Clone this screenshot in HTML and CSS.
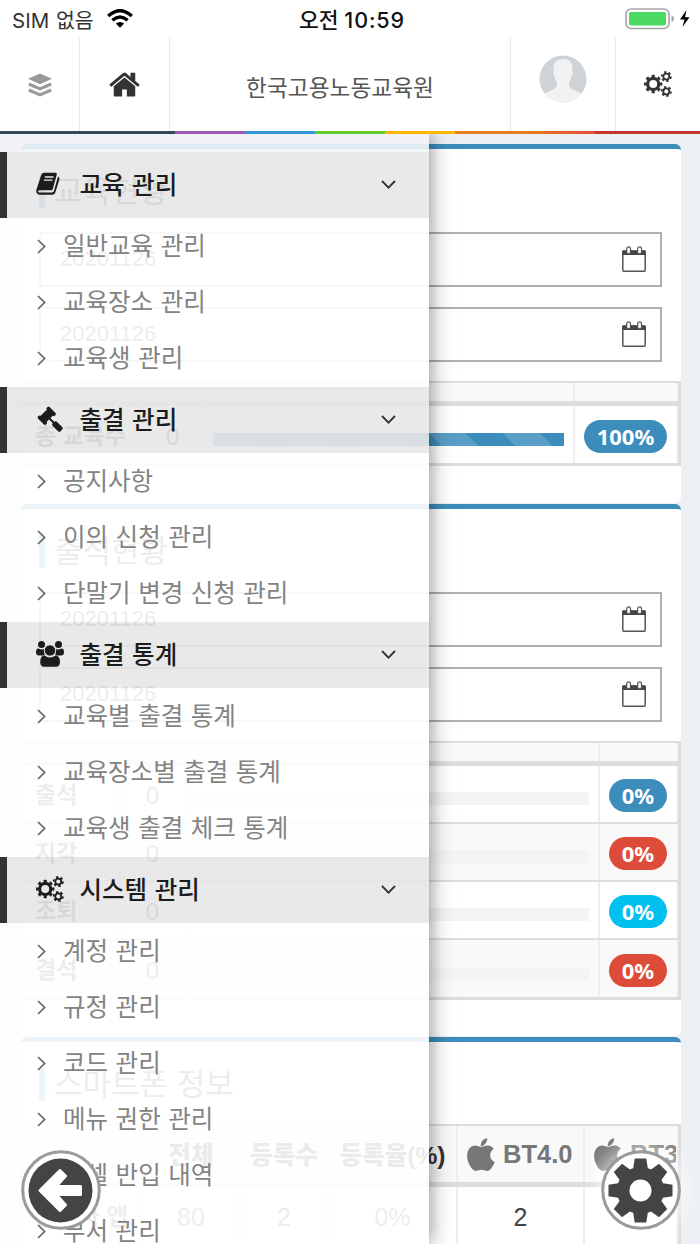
FILE: index.html
```html
<!DOCTYPE html>
<html lang="ko">
<head>
<meta charset="utf-8">
<title>한국고용노동교육원</title>
<link rel="stylesheet" href="styles.css">
</head>
<body>
<svg class="defs" aria-hidden="true">
  <symbol id="cogs" viewBox="0 0 28 26">
    <g fill="none" stroke="currentColor">
      <circle cx="9.2" cy="13" r="5.6" stroke-width="3.2"/>
      <circle cx="9.2" cy="13" r="8" stroke-width="2.4" pathLength="16" stroke-dasharray="1 1" stroke-dashoffset=".5"/>
      <circle cx="22.3" cy="5.6" r="3" stroke-width="1.8"/>
      <circle cx="22.3" cy="5.6" r="4.6" stroke-width="1.8" pathLength="12" stroke-dasharray="1 1"/>
      <circle cx="22.3" cy="20.4" r="3" stroke-width="1.8"/>
      <circle cx="22.3" cy="20.4" r="4.6" stroke-width="1.8" pathLength="12" stroke-dasharray="1 1"/>
    </g>
  </symbol>
  <symbol id="gavel" viewBox="0 0 1792 1792"><path fill="currentColor" d="M1771 1536q0 53-37 90l-107 108q-39 37-91 37-53 0-90-37l-363-364q-38-36-38-90 0-53 43-96l-256-256-126 126q-14 14-34 14t-34-14q2 2 12.500 12t12.500 13 10 11.500 10 13.500 6 13.500 5.500 16.500 1.500 18q0 38-28 68-3 3-16.500 18t-19 20.500-18.500 16.500-22 15.500-22 9-26 4.500q-40 0-68-28l-408-408q-28-28-28-68 0-13 4.500-26t9-22 15.500-22 16.500-18.500 20.500-19 18-16.500q30-28 68-28 10 0 18 1.500t16.500 5.500 13.500 6 13.500 10 11.500 10 13 12.500 12 12.500q-14-14-14-34t14-34l348-348q14-14 34-14t34 14q-2-2-12.500-12t-12.500-13-10-11.500-10-13.500-6-13.500-5.500-16.500-1.500-18q0-38 28-68 3-3 16.500-18t19-20.500 18.500-16.500 22-15.500 22-9 26-4.500q40 0 68 28l408 408q28 28 28 68 0 13-4.500 26t-9 22-15.500 22-16.500 18.500-20.500 19-18 16.500q-30 28-68 28-10 0-18-1.500t-16.500-5.500-13.500-6-13.500-10-11.500-10-13-12.500-12-12.500q14 14 14 34t-14 34l-126 126 256 256q43-43 96-43 52 0 91 37l363 363q37 39 37 91z"/></symbol>
  <symbol id="home" viewBox="70 220 1652 1340"><path fill="currentColor" d="M1472 992v480q0 26-19 45t-45 19h-384v-384h-256v384h-384q-26 0-45-19t-19-45v-480q0-1 .5-3t.5-3l575-474 575 474q1 2 1 6zm223-69l-62 74q-8 9-21 11h-3q-13 0-21-7l-692-577-692 577q-12 8-24 7-13-2-21-11l-62-74q-8-10-7-23.500t11-21.500l719-599q32-26 76-26t76 26l244 204v-195q0-14 9-23t23-9h192q14 0 23 9t9 23v408l219 182q10 8 11 21.500t-7 23.500z"/></symbol>
  <symbol id="apple" viewBox="192 0 1408 1664"><path fill="currentColor" d="M1585 1215q-39 125-123 250-129 196-257 196-49 0-140-32-86-32-151-32-61 0-142 33-81 34-132 34-152 0-301-259-147-261-147-503 0-228 113-374 113-144 284-144 72 0 177 30 104 30 138 30 45 0 143-34 102-34 173-34 119 0 213 65 52 36 104 100-79 67-114 118-65 94-65 207 0 124 69 223t158 126zm-376-1173q0 61-29 136-30 75-93 138-54 54-108 72-37 11-104 17 3-149 78-257 74-107 250-148 1 3 2.500 11t2.500 11q0 4 .5 10t.5 10z"/></symbol>
  <symbol id="book" viewBox="0 0 24 24">
    <path fill="currentColor" d="M8 .8H19.500Q21.300 .8 20.800 2.600L16.800 17Q16.400 18.300 15 18.300H3.800Q2.200 18.300 2.100 19.500Q2 20.400 3.500 20.400H16Q17.500 20.400 18 18.800L22 4.500Q24 5.500 23.400 7.500L19.200 20.800Q18.500 22.800 16.500 22.800H4Q.5 22.800 .3 19Q.2 17.800 .8 16.500L5.300 2.700Q5.900 .8 8 .8Z"/>
    <path stroke="#e9e9e9" stroke-width="1.300" d="M8.800 5H17.500M7.800 8.200H16.500"/>
  </symbol>
  <symbol id="users" viewBox="0 0 28 26">
    <g fill="currentColor">
      <circle cx="5.500" cy="3.500" r="3.500"/><circle cx="22.500" cy="3.500" r="3.500"/>
      <path d="M0 11Q0 7.300 2.500 7.500Q5.500 9 8.500 8V14.500H3Q0 14.500 0 11ZM28 11Q28 7.300 25.500 7.500Q22.500 9 19.500 8V14.500H25Q28 14.500 28 11Z"/>
      <circle cx="14" cy="9.500" r="5.700" stroke="#e9e9e9" stroke-width="1"/>
      <path d="M4.200 21Q4.200 14.400 8.500 14.400Q14 18.500 19.500 14.400Q24 14.400 24 21Q24 25.800 20 25.800H8Q4.200 25.800 4.200 21Z"/>
    </g>
  </symbol>
  <symbol id="right" viewBox="0 0 9 15"><path fill="none" stroke="currentColor" stroke-width="1.700" d="M1 1L7.600 7.500L1 14"/></symbol>
  <symbol id="down" viewBox="0 0 15 9"><path fill="none" stroke="currentColor" stroke-width="1.800" d="M1 1L7.500 7.600L14 1"/></symbol>
  <symbol id="cal" viewBox="0 0 24 26">
    <rect x=".8" y="5" width="22.400" height="20.200" rx="1" fill="#fff" stroke="#555" stroke-width="1.500"/>
    <path fill="#444" d="M.5 4.500H23.500V9H.5Z"/>
    <g fill="#fff" stroke="#555" stroke-width="1.200"><rect x="4.700" y=".8" width="3.800" height="7" rx="1.900"/><rect x="15.700" y=".8" width="3.800" height="7" rx="1.900"/></g>
  </symbol>
</svg>

<div class="screen">
  <div class="status">
    <div class="carrier">SIM 없음
      <svg class="wifi" viewBox="0 0 26 19"><g fill="none" stroke="#000" stroke-width="3.300"><path d="M1.200 7Q13-3.500 24.800 7"/><path d="M5.400 11.200Q13 4.800 20.600 11.200"/></g><path d="M8.800 14.500Q13 11.400 17.200 14.500L13 18.800Z"/></svg>
    </div>
    <div class="clock">오전 <span class="time">10:59</span></div>
    <svg class="battery" viewBox="0 0 66 22"><rect x="1" y="1" width="43" height="19.500" rx="5" fill="#fff" stroke="#a5a5a5" stroke-width="1.600"/><rect x="4" y="4" width="37" height="13.500" rx="2" fill="#4cd964"/><path d="M46.500 7.500Q49 8 49 10.700T46.500 14Z" fill="#a5a5a5"/><path d="M61.500 2L55 11.500H59.500L57.500 19L64.500 9.300H60Z"/></svg>
  </div>
  <header class="topbar">
    <div class="tb layers"><svg viewBox="0 0 24 24"><path fill="#999" d="M12 .5L24 5.800L12 11.200L0 5.800Z"/><path fill="none" stroke="#999" stroke-width="3" d="M.8 11L12 15.800L23.200 11M.8 17L12 21.800L23.200 17"/></svg></div>
    <div class="tb home"><svg><use href="#home"/></svg></div>
    <div class="tb brand">한국고용노동교육원</div>
    <div class="tb user"><svg viewBox="0 0 48 48"><clipPath id="av"><circle cx="24" cy="24" r="23.500"/></clipPath><g clip-path="url(#av)"><path fill="#cdd3d6" d="M0 0H48V48H0Z"/><path fill="#f2f2f2" d="M24 4Q34 4 33.500 14Q34.500 18 32.500 22Q31 26 30 28Q29.500 32 33 34L48 41V48H0V41L15 34Q18.500 32 18 28Q16.500 26 15.500 22Q13.500 18 14.500 14Q14 4 24 4Z"/></g></svg></div>
    <div class="tb conf"><svg><use href="#cogs"/></svg></div>
  </header>
  <div class="stripe"></div>

  <main class="content">
    <section class="card">
      <h2 class="title"><span>교육현황</span></h2>
      <div class="dates">
        <div class="date">20201126<svg><use href="#cal"/></svg></div>
        <div class="date">20201126<svg><use href="#cal"/></svg></div>
      </div>
      <div class="table edu">
        <div class="tr th"><i></i><i></i><i></i><i></i></div>
        <div class="tr"><b class="name">총 교육수</b><span class="num">0</span><span class="prog"><span class="bar full"></span></span><span class="pct"><em class="badge blue">100%</em></span></div>
      </div>
    </section>
    <section class="card">
      <h2 class="title"><span>출석현황</span></h2>
      <div class="dates">
        <div class="date">20201126<svg><use href="#cal"/></svg></div>
        <div class="date">20201126<svg><use href="#cal"/></svg></div>
      </div>
      <div class="table att">
        <div class="tr th"><i></i><i></i><i></i><i></i></div>
        <div class="tr"><b class="name">출석</b><span class="num">0</span><span class="prog"><span class="bar"></span></span><span class="pct"><em class="badge blue">0%</em></span></div>
        <div class="tr odd"><b class="name">지각</b><span class="num">0</span><span class="prog"><span class="bar"></span></span><span class="pct"><em class="badge red">0%</em></span></div>
        <div class="tr"><b class="name">조퇴</b><span class="num">0</span><span class="prog"><span class="bar"></span></span><span class="pct"><em class="badge cyan">0%</em></span></div>
        <div class="tr odd"><b class="name">결석</b><span class="num">0</span><span class="prog"><span class="bar"></span></span><span class="pct"><em class="badge red">0%</em></span></div>
      </div>
    </section>
    <section class="card phone-card">
      <h2 class="title"><span>스마트폰 정보</span></h2>
      <div class="table phone">
        <div class="tr th"><b></b><b>전체</b><b>등록수</b><b>등록율(%)</b><b class="os"><svg><use href="#apple"/></svg>BT4.0</b><b class="os"><svg><use href="#apple"/></svg>BT3</b></div>
        <div class="tr"><b class="name">관리자 앱</b><span>80</span><span>2</span><span>0%</span><span>2</span><span></span></div>
      </div>
    </section>
  </main>

  <nav class="drawer">
    <div class="head"><svg class="i-book"><use href="#book"/></svg><span>교육 관리</span><svg class="down"><use href="#down"/></svg></div>
    <div class="item"><svg><use href="#right"/></svg><span>일반교육 관리</span></div>
    <div class="item"><svg><use href="#right"/></svg><span>교육장소 관리</span></div>
    <div class="item"><svg><use href="#right"/></svg><span>교육생 관리</span></div>
    <div class="head"><svg class="i-gavel"><use href="#gavel"/></svg><span>출결 관리</span><svg class="down"><use href="#down"/></svg></div>
    <div class="item"><svg><use href="#right"/></svg><span>공지사항</span></div>
    <div class="item"><svg><use href="#right"/></svg><span>이의 신청 관리</span></div>
    <div class="item"><svg><use href="#right"/></svg><span>단말기 변경 신청 관리</span></div>
    <div class="head"><svg><use href="#users"/></svg><span>출결 통계</span><svg class="down"><use href="#down"/></svg></div>
    <div class="item"><svg><use href="#right"/></svg><span>교육별 출결 통계</span></div>
    <div class="item"><svg><use href="#right"/></svg><span>교육장소별 출결 통계</span></div>
    <div class="item"><svg><use href="#right"/></svg><span>교육생 출결 체크 통계</span></div>
    <div class="head"><svg><use href="#cogs"/></svg><span>시스템 관리</span><svg class="down"><use href="#down"/></svg></div>
    <div class="item"><svg><use href="#right"/></svg><span>계정 관리</span></div>
    <div class="item"><svg><use href="#right"/></svg><span>규정 관리</span></div>
    <div class="item"><svg><use href="#right"/></svg><span>코드 관리</span></div>
    <div class="item"><svg><use href="#right"/></svg><span>메뉴 권한 관리</span></div>
    <div class="item"><svg><use href="#right"/></svg><span>엑셀 반입 내역</span></div>
    <div class="item"><svg><use href="#right"/></svg><span>부서 관리</span></div>
  </nav>

  <div class="fab back"><svg viewBox="0 0 80 80"><circle cx="40" cy="40" r="38.300" fill="#fff" stroke="#9b9b9b" stroke-width="3"/><circle cx="39.500" cy="40.500" r="32" fill="#444"/><path fill="#fff" stroke="#fff" stroke-width="3" stroke-linejoin="round" d="M19 40.500L39 20.500L44.500 26L35 36.500H59.500V44.500H35L44.500 55L39 60.500Z"/></svg></div>
  <div class="fab setup"><svg viewBox="0 0 80 80"><circle cx="40" cy="40" r="38.300" fill="#fff" stroke="#9b9b9b" stroke-width="3"/>
    <g fill="#444" transform="translate(39.500 40.500)"><circle r="23.500"/><g id="t"><path id="tooth" d="M-7.500-21L-5.800-32H5.800L7.500-21V21L5.800 32H-5.800L-7.500 21Z"/><use href="#tooth" transform="rotate(90)"/></g><use href="#t" transform="rotate(45)"/></g><circle cx="39.500" cy="40.500" r="11" fill="#fff"/></svg></div>
</div>
</body>
</html>
```
FILE: styles.css
```css
* { box-sizing: border-box; }
body { margin: 0; font-family: "Liberation Sans", "Noto Sans CJK KR", sans-serif; color: #444; background: #ecf0f5; }
.defs { position: absolute; width: 0; height: 0; }
.screen { position: relative; width: 700px; height: 1244px; overflow: hidden; }
svg { display: block; flex: none; }

.status { height: 38px; background: #fff; display: grid; grid-template-columns: 1fr auto 1fr; align-items: center; padding: 0 9px 0 12px; font-family: Inter, "Noto Sans CJK KR", sans-serif; font-size: 21.500px; color: #333; white-space: nowrap; }
.carrier { display: flex; align-items: center; gap: 13px; font-size: 20.500px; word-spacing: 1px; padding-bottom: 1px; }
.wifi { width: 26px; height: 19px; }
.clock { color: #111; font-weight: 500; padding: 0 0 2px 1px; }
.time { letter-spacing: .9px; }
.battery { width: 66px; height: 22px; justify-self: end; }

.topbar { height: 93px; background: #fff; display: grid; grid-template-columns: 80px 90px 341px 105px 84px; }
.tb { display: flex; align-items: center; justify-content: center; border-right: 1.500px solid #e8e8e8; color: #333; }
.tb:last-child { border-right: 0; }
.layers svg { width: 24px; height: 24px; }
.home svg { width: 31px; height: 25px; }
.brand { font-size: 22.700px; color: #555; padding-top: 4px; }
.user { padding-bottom: 11px; }
.user svg { width: 48px; height: 48px; }
.conf svg { width: 28px; height: 26px; }
.conf { padding-bottom: 2px; }
.stripe { height: 3px; background: linear-gradient(90deg, #34495e 25%, #9b59b6 25% 35%, #3498db 35% 45%, #62cb31 45% 55%, #ffb606 55% 65%, #e67e22 65% 75%, #e74c3c 85%, #c0392b 85%); }

.content { padding: 10px 19px 0 21px; }
.card { height: 359px; margin-bottom: 1px; background: #fff; border-top: 5px solid #3c8dbc; border-radius: 6px; }
.card:nth-child(2) { height: 532px; }
.title { height: 83px; margin: 0; padding: 26px 18px 0; font-size: 31px; font-weight: 400; line-height: 33px; }
.title span { display: block; border-left: 6px solid #3c9cd0; padding-left: 9px; }
.dates { display: grid; gap: 20px; padding: 0 19px 0 18px; margin-bottom: 19px; }
.date { height: 55px; border: 2px solid #b0b0b0; display: flex; align-items: center; justify-content: space-between; padding: 0 14px 1px 19px; font-size: 22px; }
.date svg { width: 24px; height: 26px; }

.table { border-top: 2px solid #ddd; border-right: 3px solid #ddd; border-left: 2px solid #ddd; border-bottom: 3px solid #ddd; }
.tr { display: grid; grid-template-columns: 120px 61px 371px 1fr; height: 58px; border-bottom: 2px solid #ddd; font-size: 23px; }
.tr:last-child { height: 57px; border-bottom: 0; }
.tr > * { display: flex; align-items: center; justify-content: center; border-right: 2px solid #eee; min-width: 0; white-space: nowrap; }
.tr > *:last-child { border-right-color: #f4f4f4; }
.att .tr { grid-template-columns: 98px 65px 414px 1fr; }
.tr.th { height: 23px; border-bottom: 5px solid #ddd; background: #f9f9f9; }
.odd { background: #f9f9f9; }
.tr .name { justify-content: flex-start; padding-left: 12px; padding-bottom: 2px; font-weight: 700; }
.tr .num { padding-top: 4px; font-size: 24px; }
.tr .prog { justify-content: stretch; padding: 9px 9px 0 10px; }
.tr .pct { padding: 3px 0 0 0; }
.bar { flex: 1; height: 13px; background: #f4f4f4; border-radius: 1px; }
.full { background: #3c8dbc linear-gradient(45deg, rgba(255,255,255,.15) 25%, transparent 25% 50%, rgba(255,255,255,.15) 50% 75%, transparent 75%) -7px 0 / 74px 74px; }
.badge { font-style: normal; font-weight: 700; font-family: "Noto Sans", sans-serif; font-size: 22px; line-height: 32px; height: 33px; border-radius: 17px; color: #fff; padding: 0 12.500px; }
.blue { background: #3c8dbc; }
.red { background: #dd4b39; }
.cyan { background: #00c0ef; }
.phone-card .title { height: 82px; }
.phone .tr { grid-template-columns: 120px 98px 88px 129px 127px 1fr; }
.phone .tr.th { height: 61px; font-weight: 700; font-size: 24.600px; color: #333; }
.phone .tr.th b { padding-bottom: 2px; }
.phone .tr.th .os { padding-bottom: 0; }
.phone .tr:last-child { height: 64px; font-size: 25px; }
.phone .tr:last-child > * { padding-bottom: 4px; }
.phone .tr:last-child .name { font-size: 23.500px; padding-bottom: 8px; }
.tr .os { color: #777; gap: 8px; justify-content: flex-start; padding-left: 9px; overflow: hidden; font-size: 25.500px; }
.os svg { width: 28px; height: 33px; }

.drawer { position: absolute; left: 0; top: 134px; width: 429px; height: 1110px; padding-top: 18px; background: linear-gradient(rgba(241,243,246,.9) 18px, rgba(255,255,255,.9) 18px); box-shadow: 0 0 20px rgba(0,0,0,.5); clip-path: inset(0 -40px 0 0); font-size: 24.500px; word-spacing: .7px; }
.head { height: 66px; margin-bottom: 1px; background: rgba(0,0,0,.085); border-left: 7.500px solid #333; display: grid; grid-template-columns: 44px 1fr auto; align-items: center; padding: 0 33px 2px 28.500px; color: #1c1c1c; font-weight: 500; }
.head span { padding-bottom: 2px; }
.head svg { width: 28px; height: 26px; }
.head .down { width: 15px; height: 9px; color: #333; }
.head .i-book { width: 24px; height: 24px; }
.item { height: 56px; display: flex; align-items: center; gap: 17px; padding: 0 0 2px 37px; color: #838383; }
.item span { padding-bottom: 3px; }
.item svg { width: 9px; height: 15px; color: #666; }

.fab { position: absolute; top: 1150px; width: 80px; height: 80px; border-radius: 50%; }
.fab svg { width: 80px; height: 80px; }
.back { left: 21px; }
.setup { left: 601px; box-shadow: 0 0 22px 2px rgba(255,255,255,.9); }
```
